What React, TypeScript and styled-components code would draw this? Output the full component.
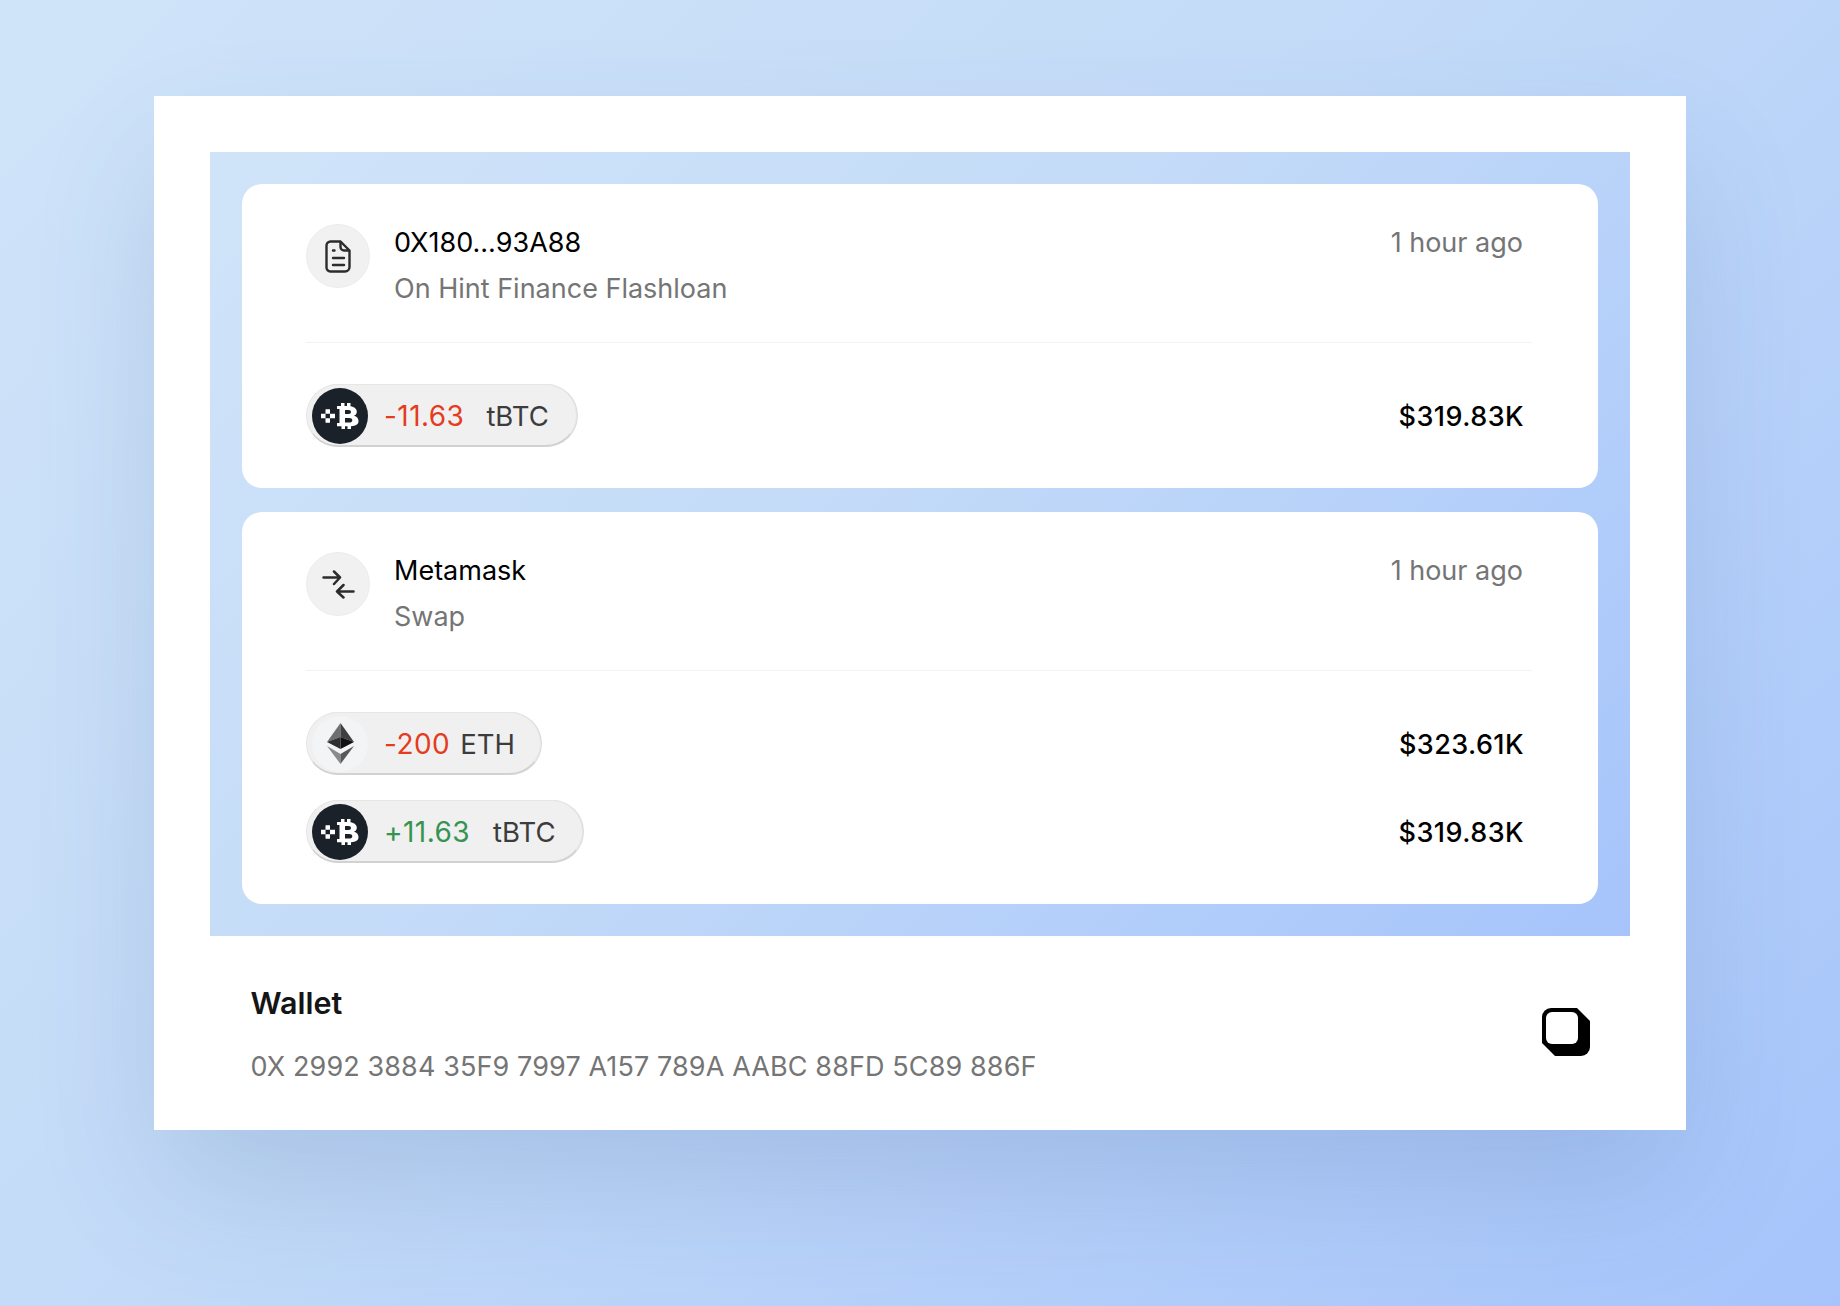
import React from 'react'
import styled, { createGlobalStyle } from 'styled-components'

const GlobalStyle = createGlobalStyle`
  html, body {
    margin: 0;
    padding: 0;
    font-family: Inter, "Noto Sans", sans-serif;
  }
`

const blueGradient = 'linear-gradient(135deg, #d0e4f9 0%, #c3dbf8 45%, #a6c4fb 100%)'

const Page = styled.div`
  box-sizing: border-box;
  width: 1840px;
  height: 1306px;
  padding-top: 96px;
  display: flex;
  justify-content: center;
  align-items: flex-start;
  background: ${blueGradient};
  overflow: hidden;
`

const Frame = styled.div`
  box-sizing: border-box;
  width: 1532px;
  height: 1034px;
  padding: 56px 56px 0;
  background: #fff;
  box-shadow: 0 60px 120px -10px rgba(60, 90, 150, 0.19);
`

const Panel = styled.div`
  display: flex;
  flex-direction: column;
  gap: 24px;
  padding: 32px;
  background: ${blueGradient};
`

const Card = styled.section`
  padding: 40px 66px 41px 64px;
  background: #fff;
  border-radius: 20px;
`

const CardHead = styled.div`
  display: flex;
  align-items: flex-start;
  height: 118px;
  border-bottom: 1px solid #f3f3f3;
  margin-bottom: 41px;
`

const IconCircle = styled.div`
  flex: none;
  box-sizing: border-box;
  width: 64px;
  height: 64px;
  margin-right: 24px;
  display: flex;
  align-items: center;
  justify-content: center;
  border-radius: 50%;
  background: #f1f1f1;
  border: 1px solid #ececec;
`

const HeadText = styled.div`
  flex: 1;
  display: flex;
  flex-direction: column;
  gap: 12px;
`

const Title = styled.div`
  font-size: 27px;
  line-height: 34px;
  margin-top: 2px;
  color: #000;
`

const Muted = styled.div`
  font-size: 27px;
  line-height: 34px;
  color: #757575;
`

const TimeAgo = styled(Muted)`
  margin: 2px 9px 0 0;
`

const AddressText = styled(Muted)`
  letter-spacing: 0.11px;
`

const AssetList = styled.div`
  display: flex;
  flex-direction: column;
  gap: 25px;
`

const AssetRow = styled.div`
  display: flex;
  align-items: center;
  justify-content: space-between;
  padding-right: 8px;
`

const Pill = styled.div<{ $end: number }>`
  box-sizing: border-box;
  height: 63px;
  padding: 1px ${(p) => p.$end}px 0 5px;
  display: flex;
  align-items: center;
  border-radius: 32px;
  background: #f0f0f0;
  border: 1px solid #e6e6e6;
  border-bottom: 2px solid #d2d2d2;
  box-shadow: 1px 0 0 #dcdcdc;
`

const Coin = styled.div<{ $dark?: boolean }>`
  flex: none;
  width: 56px;
  height: 56px;
  margin-right: 16px;
  display: flex;
  align-items: center;
  justify-content: center;
  border-radius: 50%;
  background: ${(p) => (p.$dark ? '#1b2129' : '#f3f4f6')};
`

const Delta = styled.span<{ $up?: boolean; $gap: number }>`
  font-size: 28px;
  letter-spacing: 0.45px;
  color: ${(p) => (p.$up ? '#369350' : '#e53b1e')};
  margin-right: ${(p) => p.$gap}px;
`

const Symbol = styled.span`
  font-size: 27.5px;
  color: #3c3c3c;
`

const Amount = styled.div`
  font-size: 27px;
  font-weight: 500;
  letter-spacing: 0.44px;
  margin-top: 2px;
  color: #000;
`

const WalletBar = styled.div`
  height: 194px;
  display: flex;
  align-items: center;
  justify-content: space-between;
  padding: 0 40px 0 40.5px;
`

const WalletText = styled.div`
  display: flex;
  flex-direction: column;
  gap: 28px;
  padding-top: 1px;
`

const WalletTitle = styled.div`
  font-size: 30.5px;
  line-height: 38px;
  font-weight: 600;
  color: #151515;
`

const CopyButton = styled.div`
  display: flex;
  margin-bottom: 2px;
`

const DocIcon = () => (
  <svg width="26" height="33" viewBox="0 0 26 33" fill="none" stroke="#2c2c2c" strokeWidth="2.4" strokeLinecap="round" strokeLinejoin="round">
    <path d="M5.5 1.500h10l9 9V27a4.500 4.500 0 0 1-4.500 4.500H5.500A4 4 0 0 1 1.500 27V5.500a4 4 0 0 1 4-4Z" />
    <path d="M15.500 2v5a3.500 3.500 0 0 0 3.500 3.500h5" />
    <path d="M8 10.500h1.500M8 18h11M8 25h11" />
  </svg>
)

const SwapIcon = () => (
  <svg width="33" height="29" viewBox="0 0 33 29" fill="none" stroke="#2c2c2c" strokeWidth="2.5" strokeLinecap="round" strokeLinejoin="round">
    <path d="M1.500 7.500H18M12 1.500l6 6-6 6.500" />
    <path d="M31.500 21.500H15M21.500 15l-6.500 6.500 6.500 6" />
  </svg>
)

const BtcIcon = () => (
  <svg width="38" height="26" viewBox="0 0 38 26" fill="#fff">
    <path d="M0 10.800h4.500v4.500H0zM9 10.800h5v4.500H9zM4.500 6.300H9v4.500H4.500zM4.500 15.300H9v4.500H4.500z" />
    <path
      fillRule="evenodd"
      d="M16 3H20V0H23.500V3H26V0H29.500V3.200C33.500 3.800 35.800 5.800 35.800 8.800C35.800 10.800 34.800 12 33 12.800C36 13.600 37.500 15.500 37.500 18C37.500 21.200 35 23 30 23.200V26H26.500V23.200H24V26H20.500V23.200H16V20H18.500V6H16ZM24 7V11H27.500C29.200 11 30 10.200 30 9C30 7.800 29.200 7 27.500 7ZM24 15V19.500H28C30.200 19.500 31.300 18.700 31.300 17.200C31.300 15.800 30.200 15 28 15Z"
    />
  </svg>
)

const EthIcon = () => (
  <svg width="27" height="41" viewBox="0 0 27 41">
    <polygon points="13.500,0 0,19 13.500,14" fill="#6f6f72" />
    <polygon points="13.500,0 27,19 13.500,14" fill="#3f3f42" />
    <polygon points="0,19 13.500,14 13.500,26" fill="#2f2f32" />
    <polygon points="27,19 13.500,14 13.500,26" fill="#111113" />
    <polygon points="0,23 13.500,31 13.500,41" fill="#8a8a8d" />
    <polygon points="27,23 13.500,31 13.500,41" fill="#58585b" />
  </svg>
)

const CopyIcon = () => (
  <svg width="48" height="48" viewBox="0 0 48 48">
    <path d="M9 0h26l13 13v26a9 9 0 0 1-9 9H13L0 35V9a9 9 0 0 1 9-9Z" fill="#000" />
    <rect x="4" y="4" width="32" height="32" rx="6" fill="#fff" />
  </svg>
)

type Asset = { delta: string; symbol: string; value: string; up?: boolean; gap: number; end: number; coin: 'btc' | 'eth' }

type Tx = { title: string; sub: string; icon: React.ReactNode; assets: Asset[] }

const txs: Tx[] = [
  {
    title: '0X180...93A88',
    sub: 'On Hint Finance Flashloan',
    icon: <DocIcon />,
    assets: [{ delta: '-11.63', symbol: 'tBTC', value: '$319.83K', gap: 22, end: 27, coin: 'btc' }],
  },
  {
    title: 'Metamask',
    sub: 'Swap',
    icon: <SwapIcon />,
    assets: [
      { delta: '-200', symbol: 'ETH', value: '$323.61K', gap: 10, end: 25, coin: 'eth' },
      { delta: '+11.63', symbol: 'tBTC', value: '$319.83K', up: true, gap: 23, end: 27, coin: 'btc' },
    ],
  },
]

export default function App() {
  return (
    <Page>
      <GlobalStyle />
      <Frame>
        <Panel>
          {txs.map((tx) => (
            <Card key={tx.title}>
              <CardHead>
                <IconCircle>{tx.icon}</IconCircle>
                <HeadText>
                  <Title>{tx.title}</Title>
                  <Muted>{tx.sub}</Muted>
                </HeadText>
                <TimeAgo>1 hour ago</TimeAgo>
              </CardHead>
              <AssetList>
                {tx.assets.map((a) => (
                  <AssetRow key={a.delta}>
                    <Pill $end={a.end}>
                      <Coin $dark={a.coin === 'btc'}>{a.coin === 'btc' ? <BtcIcon /> : <EthIcon />}</Coin>
                      <Delta $up={a.up} $gap={a.gap}>{a.delta}</Delta>
                      <Symbol>{a.symbol}</Symbol>
                    </Pill>
                    <Amount>{a.value}</Amount>
                  </AssetRow>
                ))}
              </AssetList>
            </Card>
          ))}
        </Panel>
        <WalletBar>
          <WalletText>
            <WalletTitle>Wallet</WalletTitle>
            <AddressText>0X 2992 3884 35F9 7997 A157 789A AABC 88FD 5C89 886F</AddressText>
          </WalletText>
          <CopyButton>
            <CopyIcon />
          </CopyButton>
        </WalletBar>
      </Frame>
    </Page>
  )
}
